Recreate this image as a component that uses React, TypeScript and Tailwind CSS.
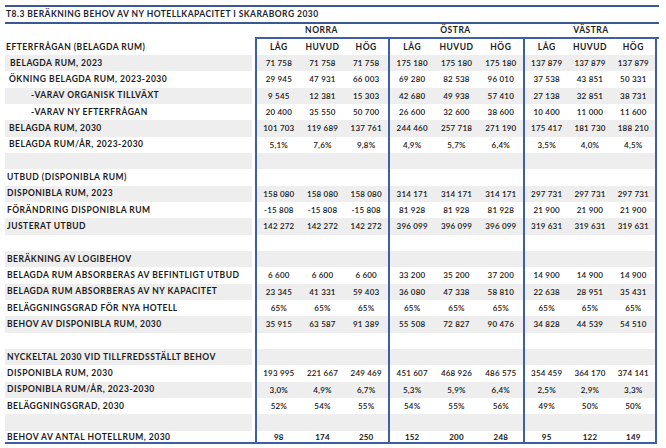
import React from "react";

type Row = {
  label?: string;
  kind: "data" | "section" | "blank" | "sub" | "first";
  vals?: string[];
  bold?: boolean;
};

const rows: Row[] = [
  { label: "BELAGDA RUM, 2023", kind: "first", vals: ["71 758", "71 758", "71 758", "175 180", "175 180", "175 180", "137 879", "137 879", "137 879"] },
  { label: "ÖKNING BELAGDA RUM, 2023-2030", kind: "data", vals: ["29 945", "47 931", "66 003", "69 280", "82 538", "96 010", "37 538", "43 851", "50 331"] },
  { label: "-VARAV ORGANISK TILLVÄXT", kind: "sub", vals: ["9 545", "12 381", "15 303", "42 680", "49 938", "57 410", "27 138", "32 851", "38 731"] },
  { label: "-VARAV NY EFTERFRÅGAN", kind: "sub", vals: ["20 400", "35 550", "50 700", "26 600", "32 600", "38 600", "10 400", "11 000", "11 600"] },
  { label: "BELAGDA RUM, 2030", kind: "data", vals: ["101 703", "119 689", "137 761", "244 460", "257 718", "271 190", "175 417", "181 730", "188 210"] },
  { label: "BELAGDA RUM/ÅR, 2023-2030", kind: "data", vals: ["5,1%", "7,6%", "9,8%", "4,9%", "5,7%", "6,4%", "3,5%", "4,0%", "4,5%"] },
  { kind: "blank" },
  { label: "UTBUD (DISPONIBLA RUM)", kind: "section" },
  { label: "DISPONIBLA RUM, 2023", kind: "data", vals: ["158 080", "158 080", "158 080", "314 171", "314 171", "314 171", "297 731", "297 731", "297 731"] },
  { label: "FÖRÄNDRING DISPONIBLA RUM", kind: "data", vals: ["-15 808", "-15 808", "-15 808", "81 928", "81 928", "81 928", "21 900", "21 900", "21 900"] },
  { label: "JUSTERAT UTBUD", kind: "data", vals: ["142 272", "142 272", "142 272", "396 099", "396 099", "396 099", "319 631", "319 631", "319 631"] },
  { kind: "blank" },
  { label: "BERÄKNING AV LOGIBEHOV", kind: "section" },
  { label: "BELAGDA RUM ABSORBERAS AV BEFINTLIGT UTBUD", kind: "data", vals: ["6 600", "6 600", "6 600", "33 200", "35 200", "37 200", "14 900", "14 900", "14 900"] },
  { label: "BELAGDA RUM ABSORBERAS AV NY KAPACITET", kind: "data", vals: ["23 345", "41 331", "59 403", "36 080", "47 338", "58 810", "22 638", "28 951", "35 431"] },
  { label: "BELÄGGNINGSGRAD FÖR NYA HOTELL", kind: "data", vals: ["65%", "65%", "65%", "65%", "65%", "65%", "65%", "65%", "65%"] },
  { label: "BEHOV AV DISPONIBLA RUM, 2030", kind: "data", vals: ["35 915", "63 587", "91 389", "55 508", "72 827", "90 476", "34 828", "44 539", "54 510"] },
  { kind: "blank" },
  { label: "NYCKELTAL 2030 VID TILLFREDSSTÄLLT BEHOV", kind: "section" },
  { label: "DISPONIBLA RUM, 2030", kind: "data", vals: ["193 995", "221 667", "249 469", "451 607", "468 926", "486 575", "354 459", "364 170", "374 141"] },
  { label: "DISPONIBLA RUM/ÅR, 2023-2030", kind: "data", vals: ["3,0%", "4,9%", "6,7%", "5,3%", "5,9%", "6,4%", "2,5%", "2,9%", "3,3%"] },
  { label: "BELÄGGNINGSGRAD, 2030", kind: "data", vals: ["52%", "54%", "55%", "54%", "55%", "56%", "49%", "50%", "50%"] },
  { kind: "blank" },
  { label: "BEHOV AV ANTAL HOTELLRUM, 2030", kind: "data", vals: ["98", "174", "250", "152", "200", "248", "95", "122", "149"], bold: true },
];

const font = { fontFamily: "Lato, 'Noto Sans', sans-serif" };

function Group({ vals, bold, striped, last }: { vals?: string[]; bold?: boolean; striped: boolean; last?: boolean }) {
  return (
    <div className={`border-l-2 border-[#3d5fa6] ${last ? "border-r-2" : ""} h-full`}>
      <div className={`grid grid-cols-3 h-full ${striped ? "bg-[#eeeeee]" : ""}`}>
        {[0, 1, 2].map((i) => (
          <div
            key={i}
            className={`flex items-center justify-center text-[8px] tracking-[0.2px] text-[#141414] ${bold ? "font-bold" : "font-semibold"}`}
          >
            {vals ? vals[i] : ""}
          </div>
        ))}
      </div>
    </div>
  );
}

export default function App() {
  return (
    <div className="w-[666px] h-[448px] bg-white pl-[5px] pt-[5px]" style={font}>
      <div className="w-[654px] h-[2px] bg-[#3a5894]" />
      <div className="h-[15px] flex items-center pl-[1px] text-[8.5px] font-bold tracking-[0.45px] text-[#1b2435]">
        T8.3 BERÄKNING BEHOV AV NY HOTELLKAPACITET I SKARABORG 2030
      </div>
      <div className="w-[654px] h-[2px] bg-[#3a5894]" />
      <div className="grid grid-cols-[250px_133px_135px_134px] h-[15px]">
        <div />
        {["NORRA", "ÖSTRA", "VÄSTRA"].map((g, i) => (
          <div
            key={g}
            className={`border-b-2 border-[#3d5fa6] flex items-center justify-center text-[8.5px] font-bold tracking-[0.5px] text-[#1b1b1b] ${i === 2 ? "mr-[-2px]" : ""}`}
          >
            {g}
          </div>
        ))}
      </div>
      <div className="grid grid-cols-[250px_133px_135px_134px] h-[16px]">
        <div className="flex items-center pl-[1px] text-[8.5px] font-bold tracking-[0.5px] text-[#1b1b1b]">
          EFTERFRÅGAN (BELAGDA RUM)
        </div>
        {[0, 1, 2].map((g) => (
          <div key={g} className={`border-l-2 border-[#3d5fa6] ${g === 2 ? "border-r-2" : ""} grid grid-cols-3`}>
            {["LÅG", "HUVUD", "HÖG"].map((h) => (
              <div key={h} className="flex items-center justify-center text-[8.5px] font-bold tracking-[0.5px] text-[#1b1b1b]">
                {h}
              </div>
            ))}
          </div>
        ))}
      </div>
      {rows.map((r, idx) => {
        const striped = idx % 2 === 0;
        const isLast = idx === rows.length - 1;
        const pad =
          r.kind === "sub" ? "pl-[26px]" : r.kind === "first" ? "pl-[5px]" : idx < 6 ? "pl-[4px]" : "pl-[2px]";
        return (
          <div
            key={idx}
            className={`grid grid-cols-[250px_133px_135px_134px] ${isLast ? "h-[13px] border-b-2 border-[#3d5fa6] w-[652px]" : "h-[16.33px]"}`}
          >
            <div className={`h-full mr-[3px] flex items-center ${pad} ${striped ? "bg-[#eeeeee]" : ""} text-[8.5px] font-bold tracking-[0.5px] text-[#1b1b1b] whitespace-nowrap`}>
              {r.label ?? ""}
            </div>
            <Group vals={r.vals} bold={r.bold} striped={striped} />
            <Group vals={r.vals?.slice(3, 6)} bold={r.bold} striped={striped} />
            <Group vals={r.vals?.slice(6, 9)} bold={r.bold} striped={striped} last />
          </div>
        );
      })}
    </div>
  );
}
